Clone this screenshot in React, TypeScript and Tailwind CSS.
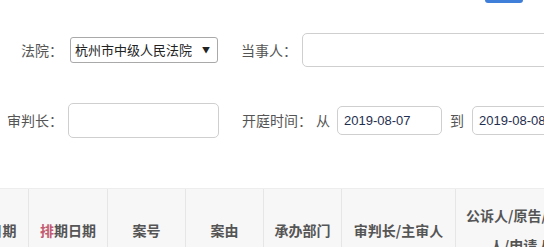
import React from "react";

const cjk = { fontFamily: '"Noto Sans CJK SC", "Noto Sans", sans-serif' };
const latin = { fontFamily: '"Liberation Sans", "Noto Sans CJK SC", sans-serif' };

export default function App() {
  const cols: { label: React.ReactNode; w: string }[] = [
    { label: "收案日期", w: "w-[79px]" },
    {
      label: (
        <>
          <span className="text-[#c25a72]">排</span>期日期
        </>
      ),
      w: "w-[79px]",
    },
    { label: "案号", w: "w-[78px]" },
    { label: "案由", w: "w-[78px]" },
    { label: "承办部门", w: "w-[78px]" },
    { label: "审判长/主审人", w: "w-[114px]" },
    { label: "公诉人/原告/上诉人/申请人", w: "w-[130px]" },
  ];
  return (
    <div className="w-[544px] h-[247px] overflow-hidden bg-white text-[#555]" style={cjk}>
      <div className="h-[3px] flex">
        <div className="ml-[485px] w-[38px] h-[3px] shrink-0 rounded-b-[4px] bg-[#3f7fd9]" />
      </div>

      {/* Row 1 */}
      <div className="mt-[30px] h-[34px] flex items-center text-[14px]">
        <div className="w-[63px] shrink-0 text-right whitespace-nowrap">法院：</div>
        <div className="ml-[7px] w-[148px] shrink-0 h-[26px] border border-[#a9a9a9] rounded-[3px] flex items-center justify-between pl-[4px] pr-[7px] text-[#222] text-[13px] bg-white">
          <span className="whitespace-nowrap overflow-hidden">杭州市中级人民法院</span>
          <span className="text-[8px] ml-[3px] shrink-0">▼</span>
        </div>
        <div className="ml-[23px] shrink-0 whitespace-nowrap">当事人：</div>
        <div className="ml-[5px] w-[260px] shrink-0 h-[34px] border border-[#cfcfcf] rounded-[5px] bg-white" />
      </div>

      {/* Row 2 */}
      <div className="mt-[36px] h-[35px] flex items-center text-[14px]">
        <div className="w-[63px] shrink-0 text-right whitespace-nowrap">审判长：</div>
        <div className="ml-[5px] w-[151px] h-[35px] border border-[#cfcfcf] rounded-[5px] bg-white shrink-0" />
        <div className="ml-[23px] shrink-0 whitespace-nowrap">开庭时间：</div>
        <div className="ml-[4px] shrink-0">从</div>
        <div
          className="ml-[7px] w-[105px] h-[29px] border border-[#cfcfcf] rounded-[5px] flex items-center pl-[6px] text-[#1f2f4f] text-[13px] shrink-0"
          style={latin}
        >
          2019-08-07
        </div>
        <div className="ml-[8px] shrink-0">到</div>
        <div
          className="ml-[8px] w-[105px] h-[29px] border border-[#cfcfcf] rounded-[5px] flex items-center pl-[6px] text-[#1f2f4f] text-[13px] shrink-0"
          style={latin}
        >
          2019-08-08
        </div>
      </div>

      {/* Table header */}
      <div className="mt-[50px] -ml-[51px] flex h-[82px] bg-[#f7f7f7] border-t border-[#ededed]">
        {cols.map((c, i) => (
          <div
            key={i}
            className={`${c.w} shrink-0 flex items-center justify-center text-center font-bold text-[14px] leading-[30px] text-[#555] px-[6px] ${
              i > 0 ? "border-l border-[#e6e6e6]" : ""
            }`}
          >
            <span>{c.label}</span>
          </div>
        ))}
      </div>
    </div>
  );
}
